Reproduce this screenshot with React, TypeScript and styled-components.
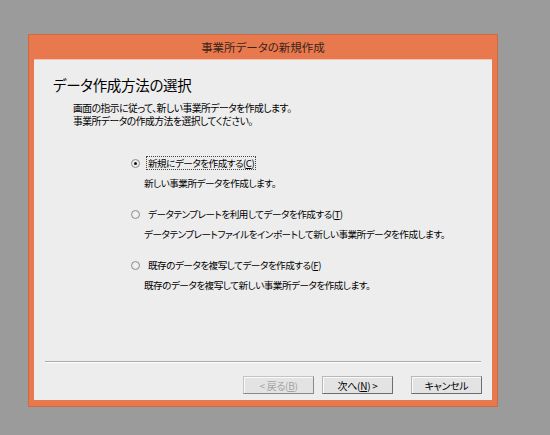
import React, { useState } from "react";
import styled, { createGlobalStyle } from "styled-components";

const GlobalStyle = createGlobalStyle`
  html, body {
    margin: 0;
    padding: 0;
    background: #9b9b9b;
  }
  body {
    font-family: "Noto Sans CJK JP", "Noto Sans", sans-serif;
    font-feature-settings: "palt";
    color: #000;
  }
`;

const Page = styled.div`
  width: 550px;
  height: 435px;
  box-sizing: border-box;
  padding: 34px 0 0 28px;
  background: #9b9b9b;
`;

const Window = styled.div`
  width: 470px;
  height: 373px;
  box-sizing: border-box;
  display: flex;
  flex-direction: column;
  background: #e8794f;
  border: 1px solid #cf6941;
  padding: 0 5px 6px 5px;
`;

const TitleBar = styled.div`
  height: 24px;
  display: flex;
  align-items: center;
  justify-content: center;
  font-size: 11.5px;
  color: #3b2418;
`;

const Client = styled.div`
  flex: 1;
  display: flex;
  flex-direction: column;
  background: #ededed;
  border-top: 1px solid #f3c3ad;
`;

const Header = styled.div`
  padding: 15px 0 0 19px;
  height: 81px;
  box-sizing: border-box;
`;

const Heading = styled.div`
  font-size: 14.5px;
  line-height: 20px;
  letter-spacing: -0.3px;
`;

const Lead = styled.div`
  margin: 7px 0 0 20px;
  font-size: 9.8px;
  line-height: 13px;
  letter-spacing: -0.5px;
  white-space: nowrap;
`;

const Options = styled.div`
  display: flex;
  flex-direction: column;
  gap: 15px;
  padding: 14px 0 0 97px;
`;

const Option = styled.div`
  display: flex;
  flex-direction: column;
  gap: 4px;
`;

const OptionRow = styled.label`
  display: flex;
  align-items: center;
  height: 16px;
  gap: 7px;
  cursor: default;
`;

const Radio = styled.span<{ $checked: boolean }>`
  width: 9px;
  height: 9px;
  box-sizing: border-box;
  border-radius: 50%;
  border: 1px solid #8c8c8c;
  background: radial-gradient(circle, #f6f6f6 0%, #e2e2e2 100%);
  display: flex;
  align-items: center;
  justify-content: center;
  &::after {
    content: "";
    width: 3px;
    height: 3px;
    border-radius: 50%;
    background: ${(p) => (p.$checked ? "#111" : "transparent")};
  }
`;

const OptionLabel = styled.span<{ $focused: boolean }>`
  font-size: 9.6px;
  line-height: 12px;
  letter-spacing: -0.5px;
  white-space: nowrap;
  padding: 0 1px;
  outline: ${(p) => (p.$focused ? "1px dotted #444" : "none")};
`;

const OptionDesc = styled.div`
  height: 16px;
  display: flex;
  align-items: center;
  padding-left: 13px;
  font-size: 9.6px;
  letter-spacing: -0.5px;
  white-space: nowrap;
`;

const Key = styled.span`
  text-decoration: underline;
  text-underline-offset: 1px;
`;

const Spacer = styled.div`
  flex: 1;
`;

const Separator = styled.div`
  margin: 0 11px;
  height: 1px;
  background: #a9a9a9;
  border-bottom: 1px solid #fdfdfd;
`;

const ButtonRow = styled.div`
  display: flex;
  justify-content: flex-end;
  padding: 13px 10px 6px 0;
`;

const Button = styled.button<{ $gap?: number }>`
  width: 71px;
  height: 18px;
  margin-left: ${(p) => p.$gap ?? 0}px;
  box-sizing: border-box;
  padding: 0;
  font-family: "Noto Sans CJK JP", "Noto Sans", sans-serif;
  font-feature-settings: "palt";
  font-size: 10px;
  letter-spacing: -0.3px;
  color: #000;
  background: #e3e3e3;
  border: 1px solid #b8b8b8;
  border-right-color: #6e6e6e;
  border-bottom-color: #6e6e6e;
  box-shadow: inset 1px 1px 0 #fafafa;
  display: flex;
  align-items: center;
  justify-content: center;
  &:disabled {
    color: #a3a3a3;
    border-color: #c4c4c4;
    border-right-color: #8a8a8a;
    border-bottom-color: #8a8a8a;
  }
`;

const options = [
  {
    label: "新規にデータを作成する",
    key: "C",
    desc: "新しい事業所データを作成します。",
  },
  {
    label: "データテンプレートを利用してデータを作成する",
    key: "T",
    desc: "データテンプレートファイルをインポートして新しい事業所データを作成します。",
  },
  {
    label: "既存のデータを複写してデータを作成する",
    key: "F",
    desc: "既存のデータを複写して新しい事業所データを作成します。",
  },
];

export default function App() {
  const [selected, setSelected] = useState(0);

  return (
    <Page>
      <GlobalStyle />
      <Window>
        <TitleBar>事業所データの新規作成</TitleBar>
        <Client>
          <Header>
            <Heading>データ作成方法の選択</Heading>
            <Lead>
              画面の指示に従って、新しい事業所データを作成します。
              <br />
              事業所データの作成方法を選択してください。
            </Lead>
          </Header>
          <Options>
            {options.map((o, index) => (
              <Option key={o.key}>
                <OptionRow onClick={() => setSelected(index)}>
                  <Radio $checked={selected === index} />
                  <OptionLabel $focused={selected === index}>
                    {o.label}(<Key>{o.key}</Key>)
                  </OptionLabel>
                </OptionRow>
                <OptionDesc>{o.desc}</OptionDesc>
              </Option>
            ))}
          </Options>
          <Spacer />
          <Separator />
          <ButtonRow>
            <Button disabled>
              &lt; 戻る(<Key>B</Key>)
            </Button>
            <Button $gap={8}>
              次へ(<Key>N</Key>) &gt;
            </Button>
            <Button $gap={18}>キャンセル</Button>
          </ButtonRow>
        </Client>
      </Window>
    </Page>
  );
}
